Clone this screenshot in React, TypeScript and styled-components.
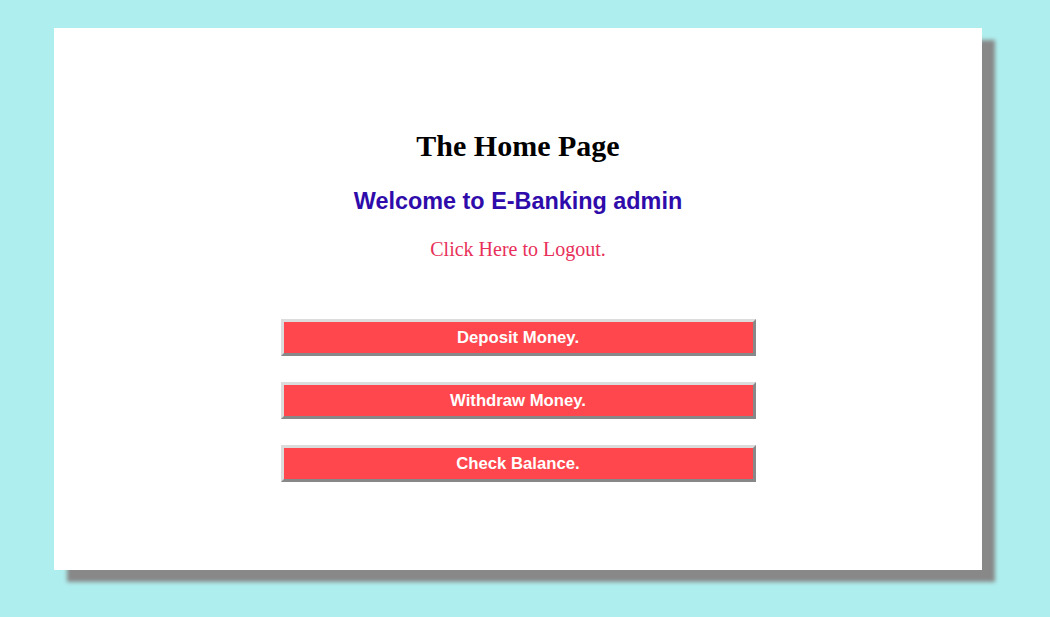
import React from "react";
import styled, { createGlobalStyle } from "styled-components";

const Global = createGlobalStyle`
  html, body { margin: 0; padding: 0; }
  body { background: #afeeee; font-family: "Liberation Serif", "Times New Roman", serif; }
`;

const Page = styled.div`
  padding: 28px 0 47px 54px;
`;

const Card = styled.div`
  width: 928px;
  height: 542px;
  box-sizing: border-box;
  background: #fff;
  box-shadow: 13px 12px 4px #888;
  display: flex;
  flex-direction: column;
  align-items: center;
  padding-top: 98px;
`;

const Title = styled.h1`
  margin: 0;
  font-family: "Liberation Serif", serif;
  font-weight: bold;
  font-size: 30px;
  line-height: 40px;
  color: #000;
`;

const Welcome = styled.h2`
  margin: 21px 0 0;
  font-family: "Liberation Sans", Arial, sans-serif;
  font-weight: bold;
  font-size: 23.4px;
  line-height: 28px;
  color: #2e0baa;
`;

const Logout = styled.a`
  margin-top: 22px;
  font-family: "Liberation Serif", serif;
  font-size: 20px;
  line-height: 24px;
  color: #e8305a;
  text-decoration: none;
  cursor: pointer;
`;

const Buttons = styled.div`
  margin-top: 58px;
  display: flex;
  flex-direction: column;
  gap: 26px;
  align-items: center;
`;

const Button = styled.button`
  width: 475px;
  height: 37px;
  box-sizing: border-box;
  background: #ff474d;
  color: #fff;
  font-family: "Liberation Sans", Arial, sans-serif;
  font-weight: bold;
  font-size: 16.7px;
  border-style: solid;
  border-width: 3px;
  border-color: #dcdcdc #888 #888 #dcdcdc;
  padding: 0;
  cursor: pointer;
`;

export default function App() {
  return (
    <>
      <Global />
      <Page>
        <Card>
          <Title>The Home Page</Title>
          <Welcome>Welcome to E-Banking admin</Welcome>
          <Logout>Click Here to Logout.</Logout>
          <Buttons>
            <Button>Deposit Money.</Button>
            <Button>Withdraw Money.</Button>
            <Button>Check Balance.</Button>
          </Buttons>
        </Card>
      </Page>
    </>
  );
}
